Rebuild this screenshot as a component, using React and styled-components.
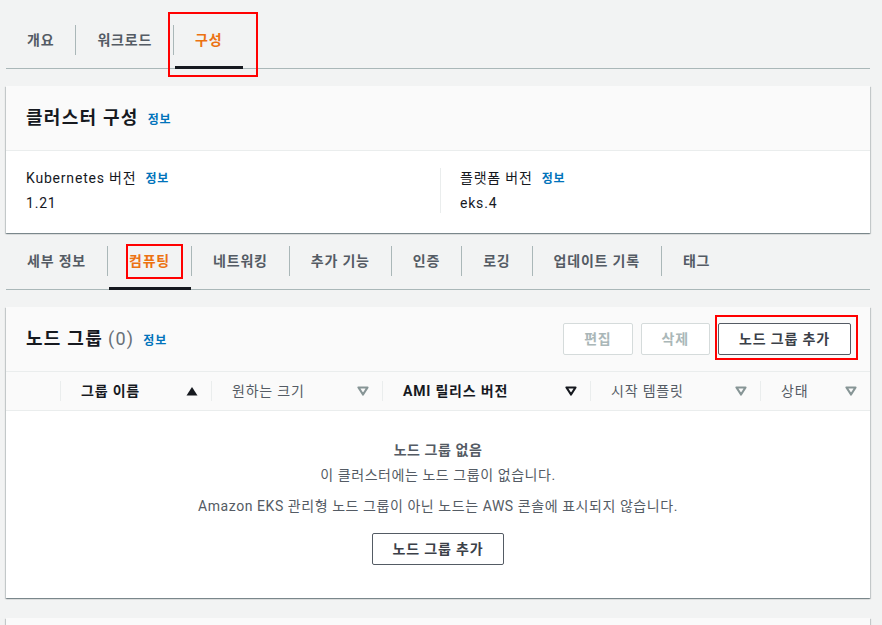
import React from "react";
import styled, { createGlobalStyle } from "styled-components";

const GlobalStyle = createGlobalStyle`
  body {
    margin: 0;
    background: #f2f3f3;
    font-family: Roboto, "Noto Sans CJK KR", sans-serif;
    letter-spacing: 0.05em;
    color: #16191f;
  }
`;

const Page = styled.div`
  padding: 12px 12px 0 6px;
  overflow: hidden;
  height: 613px;
`;

const TabBar = styled.div`
  display: flex;
  border-bottom: 1px solid #aab7b8;
`;

const Tab = styled.div`
  position: relative;
  height: 56px;
  padding: 0 21px;
  display: flex;
  align-items: center;
  font-size: 14px;
  line-height: 20px;
  font-weight: 700;
  color: ${(p) => (p.$active ? "#ec7211" : "#545b64")};
  white-space: nowrap;

  &::after {
    content: "";
    display: ${(p) => (p.$active ? "block" : "none")};
    position: absolute;
    left: 1px;
    right: 0;
    bottom: -1px;
    height: 3px;
    background: #16191f;
  }
`;

const TabSep = styled.div`
  width: 1px;
  height: 30px;
  align-self: center;
  background: #aab7b8;
`;

const Highlight = styled.div`
  position: absolute;
  inset: ${(p) => p.$inset};
  border: 2px solid #ff0000;
  pointer-events: none;
`;

const Card = styled.div`
  margin-top: ${(p) => p.$mt || 17}px;
  background: #fff;
  box-shadow: 0 1px 1px 0 rgba(0, 28, 36, 0.3), 1px 1px 1px 0 rgba(0, 28, 36, 0.15),
    -1px 1px 1px 0 rgba(0, 28, 36, 0.15);
`;

const CardHeader = styled.div`
  height: 64px;
  padding: 0 19px 0 20px;
  display: flex;
  align-items: center;
  justify-content: space-between;
  background: #fafafa;
  border-bottom: 1px solid #eaeded;
`;

const TitleWrap = styled.div`
  display: flex;
  align-items: baseline;
`;

const Title = styled.h2`
  margin: 0;
  font-size: 18px;
  line-height: 22px;
  font-weight: 700;
  letter-spacing: 0.07em;
  color: #16191f;
`;

const Count = styled.span`
  margin-left: 5px;
  font-size: 18px;
  font-weight: 400;
  color: #687078;
`;

const InfoLink = styled.a`
  margin-left: 9px;
  font-size: 12px;
  font-weight: 700;
  color: #0073bb;
  text-decoration: none;
`;

const Columns = styled.div`
  display: grid;
  grid-template-columns: 414px 1fr;
  padding: 17px 20px 20px;
`;

const Column = styled.div`
  padding-left: ${(p) => (p.$divided ? "19px" : "0")};
  border-left: ${(p) => (p.$divided ? "1px solid #eaeded" : "none")};
`;

const Label = styled.div`
  display: flex;
  align-items: baseline;
  font-size: 14px;
  line-height: 20px;
  color: #16191f;
`;

const Value = styled.div`
  margin-top: 4px;
  font-size: 14px;
  line-height: 20px;
  color: #16191f;
`;

const Actions = styled.div`
  display: flex;
  gap: 8px;
`;

const Button = styled.button`
  position: relative;
  height: 32px;
  padding: 0 20px;
  border-radius: 2px;
  border: 1px solid ${(p) => (p.disabled ? "#d5dbdb" : "#545b64")};
  background: #fff;
  color: ${(p) => (p.disabled ? "#aab7b8" : "#3b4048")};
  font-family: inherit;
  letter-spacing: 0.06em;
  font-size: 14px;
  font-weight: 700;
  line-height: 20px;
  white-space: nowrap;
`;

const TableHead = styled.div`
  display: grid;
  grid-template-columns: 54px 151px 171px 208px 170px 1fr;
  height: 38px;
  background: #fafafa;
  border-bottom: 1px solid #eaeded;
`;

const HeadCell = styled.div`
  position: relative;
  display: flex;
  align-items: center;
  justify-content: space-between;
  padding: 0 13px 0 21px;
  font-size: 14px;
  line-height: 20px;
  font-weight: ${(p) => (p.$strong ? 700 : 400)};
  color: ${(p) => (p.$strong ? "#16191f" : "#545b64")};
  white-space: nowrap;

  &::before {
    content: "";
    display: ${(p) => (p.$first ? "none" : "block")};
    position: absolute;
    left: 0;
    top: 9px;
    bottom: 9px;
    width: 1px;
    background: #eaeded;
  }
`;

const Empty = styled.div`
  display: flex;
  flex-direction: column;
  align-items: center;
  padding: 29px 0 33px;
  color: #545b64;
  font-size: 14px;
  line-height: 20px;
  letter-spacing: 0.04em;
`;

const EmptyTitle = styled.div`
  font-weight: 700;
`;

const EmptyText = styled.div`
  margin-top: ${(p) => p.$mt}px;
`;

const EmptyAction = styled.div`
  margin-top: 17px;
`;

const Stub = styled.div`
  height: 40px;
  background: #fafafa;
`;

function SortIcon({ kind }) {
  if (kind === "asc") {
    return (
      <svg width="12" height="10" viewBox="0 0 12 10">
        <path d="M6 1 L11.5 9.5 L0.5 9.5 Z" fill="#16191f" />
      </svg>
    );
  }
  const color = kind === "active" ? "#16191f" : "#879596";
  return (
    <svg width="12" height="10" viewBox="0 0 12 10">
      <path
        d="M1.5 1.5 L10.5 1.5 L6 8.5 Z"
        fill="none"
        stroke={color}
        strokeWidth="2.2"
        strokeLinejoin="round"
      />
    </svg>
  );
}

const topTabs = ["개요", "워크로드", "구성"];
const subTabs = ["세부 정보", "컴퓨팅", "네트워킹", "추가 기능", "인증", "로깅", "업데이트 기록", "태그"];

const columns = [
  { label: "그룹 이름", sort: "asc", strong: true },
  { label: "원하는 크기", sort: "idle" },
  { label: "AMI 릴리스 버전", sort: "active", strong: true },
  { label: "시작 템플릿", sort: "idle" },
  { label: "상태", sort: "idle" },
];

function Tabs({ items, active, highlight }) {
  return (
    <TabBar>
      {items.map((t, i) => (
        <React.Fragment key={t}>
          {i > 0 && <TabSep />}
          <Tab $active={t === active}>
            {t}
            {t === active && <Highlight $inset={highlight} />}
          </Tab>
        </React.Fragment>
      ))}
    </TabBar>
  );
}

export default function App() {
  return (
    <>
      <GlobalStyle />
      <Page>
        <Tabs items={topTabs} active="구성" highlight="0 -15px -9px -6px" />

        <Card>
          <CardHeader>
            <TitleWrap>
              <Title>클러스터 구성</Title>
              <InfoLink>정보</InfoLink>
            </TitleWrap>
          </CardHeader>
          <Columns>
            <Column>
              <Label>
                Kubernetes 버전<InfoLink>정보</InfoLink>
              </Label>
              <Value>1.21</Value>
            </Column>
            <Column $divided>
              <Label>
                플랫폼 버전<InfoLink>정보</InfoLink>
              </Label>
              <Value>eks.4</Value>
            </Column>
          </Columns>
        </Card>

        <Tabs items={subTabs} active="컴퓨팅" highlight="11px 8px 10px 18px" />

        <Card>
          <CardHeader>
            <TitleWrap>
              <Title>
                노드 그룹<Count>(0)</Count>
              </Title>
              <InfoLink>정보</InfoLink>
            </TitleWrap>
            <Actions>
              <Button disabled>편집</Button>
              <Button disabled>삭제</Button>
              <Button>
                노드 그룹 추가
                <Highlight $inset="-9px -8px -6px -4px" />
              </Button>
            </Actions>
          </CardHeader>
          <TableHead>
            <HeadCell $first />
            {columns.map((c) => (
              <HeadCell key={c.label} $strong={c.strong}>
                {c.label}
                <SortIcon kind={c.sort} />
              </HeadCell>
            ))}
          </TableHead>
          <Empty>
            <EmptyTitle>노드 그룹 없음</EmptyTitle>
            <EmptyText $mt={5}>이 클러스터에는 노드 그룹이 없습니다.</EmptyText>
            <EmptyText $mt={11}>
              Amazon EKS 관리형 노드 그룹이 아닌 노드는 AWS 콘솔에 표시되지 않습니다.
            </EmptyText>
            <EmptyAction>
              <Button>노드 그룹 추가</Button>
            </EmptyAction>
          </Empty>
        </Card>

        <Card $mt={20}>
          <Stub />
        </Card>
      </Page>
    </>
  );
}
